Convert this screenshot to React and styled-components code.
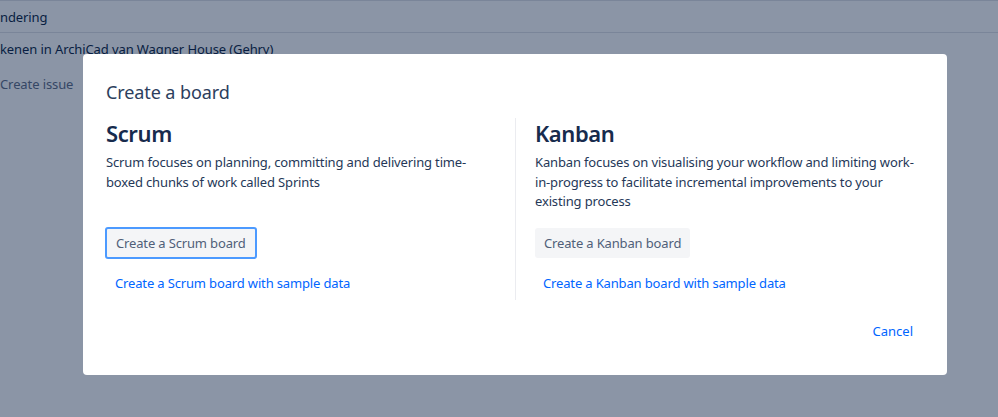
import styled, { createGlobalStyle } from 'styled-components';

const GlobalStyle = createGlobalStyle`
  html, body {
    margin: 0;
    padding: 0;
    height: 100%;
  }
  body {
    font-family: 'Noto Sans', 'Liberation Sans', sans-serif;
    background: #fff;
    overflow: hidden;
  }
`;

const Page = styled.div`
  position: relative;
  width: 998px;
  height: 417px;
  overflow: hidden;
`;

const IssueList = styled.ul`
  list-style: none;
  margin: 0;
  padding: 0;
`;

const IssueRow = styled.li`
  height: ${(p) => (p.$muted ? '40px' : '31px')};
  display: flex;
  align-items: center;
  padding-left: ${(p) => p.$indent || 0}px;
  border-top: ${(p) => (p.$muted ? 'none' : '1px solid #dfe1e6')};
  font-size: 13px;
  letter-spacing: -0.1px;
  color: ${(p) => (p.$muted ? '#5e6c84' : '#091e42')};
`;

const Blanket = styled.div`
  position: absolute;
  inset: 0;
  background: rgba(9, 30, 66, 0.47);
  display: flex;
  align-items: flex-start;
  justify-content: flex-start;
  padding: 54px 0 0 83px;
`;

const Modal = styled.div`
  width: 864px;
  height: 321px;
  box-sizing: border-box;
  background: #fff;
  border-radius: 4px;
  padding: 22px 24px 0 23px;
  display: flex;
  flex-direction: column;
  color: #172b4d;
`;

const Title = styled.h2`
  margin: 0;
  font-size: 18px;
  font-weight: 400;
  line-height: 32px;
  letter-spacing: -0.1px;
  color: #2c3e5d;
`;

const Columns = styled.div`
  display: grid;
  grid-template-columns: 409px 1fr;
  margin-top: 10px;
  height: 182px;
`;

const Column = styled.section`
  display: flex;
  flex-direction: column;
  padding: ${(p) => (p.$right ? '0 0 0 19px' : '0')};
  border-left: ${(p) => (p.$right ? '1px solid #ebecf0' : 'none')};
`;

const Heading = styled.h3`
  margin: 0;
  font-size: 22px;
  font-weight: 600;
  line-height: 30px;
  letter-spacing: -0.4px;
  color: #172b4d;
`;

const Description = styled.p`
  margin: 5px 0 0;
  font-size: 13px;
  line-height: 19.5px;
  letter-spacing: -0.15px;
  color: #253858;
  max-width: ${(p) => p.$max}px;
`;

const Actions = styled.div`
  margin-top: auto;
  display: flex;
  flex-direction: column;
  align-items: flex-start;
  gap: 14px;
  padding-bottom: 7px;
`;

const BoardButton = styled.button`
  box-sizing: border-box;
  font-family: inherit;
  font-size: 13px;
  line-height: 20px;
  letter-spacing: -0.15px;
  height: ${(p) => (p.$focused ? '32px' : '30px')};
  margin: ${(p) => (p.$focused ? '0 0 0 -1px' : '1px 0')};
  padding: 0 9px;
  border-radius: 3px;
  background: #f4f5f7;
  color: #505f79;
  border: ${(p) => (p.$focused ? '2px solid #4c9aff' : 'none')};
  cursor: pointer;
`;

const SampleLink = styled.a`
  font-size: 13px;
  line-height: 20px;
  letter-spacing: -0.15px;
  color: #0065ff;
  text-decoration: none;
  padding: 0 ${(p) => p.$pad}px;
  cursor: pointer;
`;

const Footer = styled.div`
  display: flex;
  justify-content: flex-end;
  margin-top: 21px;
  padding-right: 10px;
`;

const CancelLink = styled.a`
  font-size: 13px;
  line-height: 20px;
  color: #0065ff;
  text-decoration: none;
  cursor: pointer;
`;

const boards = [
  {
    name: 'Scrum',
    text: 'Scrum focuses on planning, committing and delivering time-boxed chunks of work called Sprints',
    focused: true,
    pad: 9,
    max: 380,
  },
  {
    name: 'Kanban',
    text: 'Kanban focuses on visualising your workflow and limiting work-in-progress to facilitate incremental improvements to your existing process',
    focused: false,
    pad: 8,
    max: 388,
  },
];

export default function App() {
  return (
    <Page>
      <GlobalStyle />
      <IssueList>
        <IssueRow $indent={0}>ndering</IssueRow>
        <IssueRow $indent={0}>kenen in ArchiCad van Wagner House (Gehry)</IssueRow>
        <IssueRow $indent={0} $muted>Create issue</IssueRow>
      </IssueList>
      <Blanket>
        <Modal>
          <Title>Create a board</Title>
          <Columns>
            {boards.map((b, i) => (
              <Column key={b.name} $right={i > 0}>
                <Heading>{b.name}</Heading>
                <Description $max={b.max}>{b.text}</Description>
                <Actions>
                  <BoardButton $focused={b.focused}>Create a {b.name} board</BoardButton>
                  <SampleLink $pad={b.pad}>Create a {b.name} board with sample data</SampleLink>
                </Actions>
              </Column>
            ))}
          </Columns>
          <Footer>
            <CancelLink>Cancel</CancelLink>
          </Footer>
        </Modal>
      </Blanket>
    </Page>
  );
}
